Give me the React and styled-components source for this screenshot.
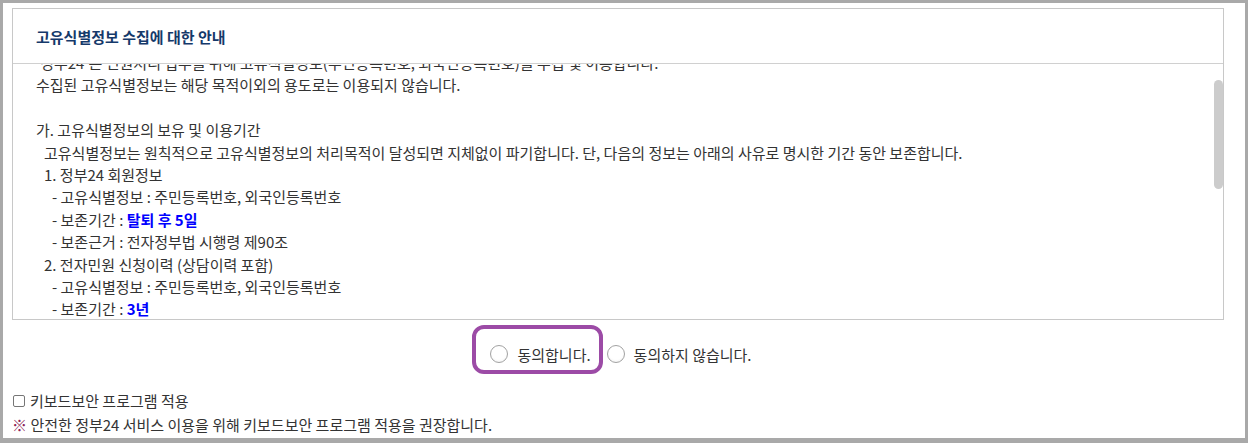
import React, { useLayoutEffect, useRef } from "react";
import styled, { createGlobalStyle } from "styled-components";

const GlobalStyle = createGlobalStyle`
  html, body {
    margin: 0;
    padding: 0;
    background: #ffffff;
  }
  body {
    font-family: "Noto Sans CJK KR", "Noto Sans", sans-serif;
    color: #333333;
  }
`;

const Frame = styled.div`
  box-sizing: border-box;
  width: 1248px;
  height: 443px;
  border: 3px solid #a9a9a9;
  border-bottom-width: 5px;
  padding: 5px 21px 0 9px;
  background: #ffffff;
`;

const NoticeBox = styled.section`
  border: 1px solid #c8c8c8;
  background: #ffffff;
`;

const NoticeHeader = styled.div`
  height: 54px;
  display: flex;
  align-items: center;
  padding-left: 23px;
  border-bottom: 1px solid #d0d0d0;
`;

const NoticeTitle = styled.h3`
  margin: 0;
  font-size: 15px;
  font-weight: 700;
  color: #15396a;
`;

const ScrollWrap = styled.div`
  position: relative;
`;

const ScrollArea = styled.div`
  height: 255px;
  overflow-y: scroll;
  padding: 25px 0 20px 23px;
  box-sizing: border-box;
  font-size: 15px;
  line-height: 22.4px;
  color: #333333;
  scrollbar-width: none;

  &::-webkit-scrollbar {
    display: none;
  }
`;

const Thumb = styled.div`
  position: absolute;
  right: 0;
  top: 16px;
  width: 9px;
  height: 109px;
  border-radius: 5px;
  background: #cccccc;
`;

const Line = styled.p`
  margin: 0;
  min-height: 22.4px;
  padding-left: ${(p) => p.$indent * 8}px;
  white-space: nowrap;
`;

const Strong = styled.strong`
  color: #0000ff;
  font-weight: 700;
`;

const ConsentRow = styled.div`
  display: flex;
  justify-content: center;
  align-items: center;
  gap: 16px;
  height: 34px;
  margin-top: 17px;
  padding-left: 6px;
  font-size: 15px;
`;

const Option = styled.label`
  position: relative;
  display: flex;
  align-items: center;
  gap: 9px;
  height: 20px;
  color: #333333;

  ${(p) =>
    p.$highlight &&
    `
    &::before {
      content: "";
      position: absolute;
      left: -18px;
      right: -12px;
      top: -19px;
      bottom: -10px;
      border: 4px solid #9c4ba6;
      border-radius: 12px;
      pointer-events: none;
    }
  `}
`;

const Radio = styled.input.attrs({ type: "radio" })`
  appearance: none;
  margin: 0;
  width: 18px;
  height: 18px;
  border-radius: 50%;
  border: 1px solid #a2a2a2;
  background: radial-gradient(circle at 50% 40%, #ffffff 55%, #ececec 100%);
  box-sizing: border-box;
`;

const Extras = styled.div`
  margin-top: 18px;
  font-size: 15px;
  line-height: 24px;
  color: #333333;
`;

const CheckRow = styled.label`
  display: flex;
  align-items: center;
  gap: 5px;
`;

const Check = styled.input.attrs({ type: "checkbox" })`
  appearance: none;
  margin: 0 0 0 1px;
  width: 12px;
  height: 12px;
  border: 1px solid #767676;
  border-radius: 2px;
  background: #ffffff;
  box-sizing: border-box;
`;

const Note = styled.p`
  margin: 0;
`;

const Mark = styled.span`
  color: #8e1f56;
`;

const lines = [
  { t: "'정부24'는 민원처리 업무를 위해 고유식별정보(주민등록번호, 외국인등록번호)를 수집 및 이용합니다.", i: 0 },
  { t: "수집된 고유식별정보는 해당 목적이외의 용도로는 이용되지 않습니다.", i: 0 },
  { t: "", i: 0 },
  { t: "가. 고유식별정보의 보유 및 이용기간", i: 0 },
  { t: "고유식별정보는 원칙적으로 고유식별정보의 처리목적이 달성되면 지체없이 파기합니다. 단, 다음의 정보는 아래의 사유로 명시한 기간 동안 보존합니다.", i: 1 },
  { t: "1. 정부24 회원정보", i: 1 },
  { t: "- 고유식별정보 : 주민등록번호, 외국인등록번호", i: 2 },
  { t: "- 보존기간 : ", b: "탈퇴 후 5일", i: 2 },
  { t: "- 보존근거 : 전자정부법 시행령 제90조", i: 2 },
  { t: "2. 전자민원 신청이력 (상담이력 포함)", i: 1 },
  { t: "- 고유식별정보 : 주민등록번호, 외국인등록번호", i: 2 },
  { t: "- 보존기간 : ", b: "3년", i: 2 },
  { t: "- 보존근거 : 민원 처리에 관한 법률 시행령 제90조", i: 2 },
  { t: "", i: 0 },
  { t: "나. 동의를 거부할 권리 및 동의 거부에 따른 불이익", i: 0 },
  { t: "귀하는 고유식별정보 수집에 대한 동의를 거부할 권리가 있습니다.", i: 1 },
  { t: "다만, 동의를 거부하실 경우 회원가입 및 서비스 이용이 제한됩니다.", i: 1 },
  { t: "", i: 0 },
  { t: "다. 고유식별정보 처리의 근거", i: 0 },
  { t: "- 전자정부법 시행령 제90조(고유식별정보의 처리)", i: 2 },
  { t: "- 민원 처리에 관한 법률 시행령 제58조(고유식별정보의 처리)", i: 2 },
  { t: "", i: 0 },
  { t: "위 내용을 확인하였으며 이에 동의합니다.", i: 0 },
];

export default function App() {
  const scrollRef = useRef(null);

  useLayoutEffect(() => {
    if (scrollRef.current) scrollRef.current.scrollTop = 37;
  }, []);

  return (
    <>
      <GlobalStyle />
      <Frame>
        <NoticeBox>
          <NoticeHeader>
            <NoticeTitle>고유식별정보 수집에 대한 안내</NoticeTitle>
          </NoticeHeader>
          <ScrollWrap>
            <ScrollArea ref={scrollRef}>
              {lines.map((l, idx) => (
                <Line key={idx} $indent={l.i}>
                  {l.t}
                  {l.b && <Strong>{l.b}</Strong>}
                </Line>
              ))}
            </ScrollArea>
            <Thumb />
          </ScrollWrap>
        </NoticeBox>

        <ConsentRow>
          <Option $highlight>
            <Radio name="agree" />
            동의합니다.
          </Option>
          <Option>
            <Radio name="agree" />
            동의하지 않습니다.
          </Option>
        </ConsentRow>

        <Extras>
          <CheckRow>
            <Check />
            키보드보안 프로그램 적용
          </CheckRow>
          <Note>
            <Mark>※</Mark> 안전한 정부24 서비스 이용을 위해 키보드보안 프로그램 적용을 권장합니다.
          </Note>
        </Extras>
      </Frame>
    </>
  );
}
